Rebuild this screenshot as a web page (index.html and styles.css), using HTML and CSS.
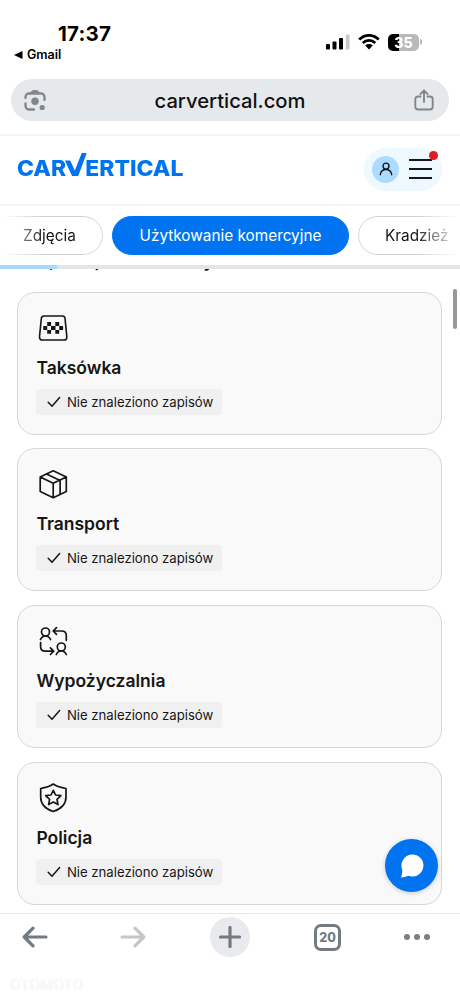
FILE: index.html
```html
<!DOCTYPE html>
<html lang="pl">
<head>
<meta charset="utf-8">
<title>carVertical</title>
<link rel="stylesheet" href="styles.css">
</head>
<body>
<div class="phone">
  <div class="status">
    <div class="status-left">
      <div class="time">17:37</div>
      <div class="back-app"><svg width="9" height="8" viewBox="0 0 9 8"><path d="M0 4 8.500 0V8Z"/></svg><span>Gmail</span></div>
    </div>
    <div class="status-right">
      <svg class="signal" width="24" height="16" viewBox="0 0 24 16"><rect x="0" y="10" width="4" height="5.500" rx="1"/><rect x="6.500" y="7.500" width="4" height="8" rx="1"/><rect x="13" y="4" width="4" height="11.500" rx="1"/><rect x="19.800" y="0.500" width="3.700" height="15" rx="1" fill="#c9c9c9"/></svg>
      <svg class="wifi" width="22" height="16" viewBox="0 0 22 16"><path d="M1.200 5.500C7-.1 15-.1 20.800 5.500M4.700 9c3.700-3.500 8.900-3.500 12.600 0" fill="none" stroke="#000" stroke-width="2.700"/><path d="M7.200 11.500c2.300-1.900 5.300-1.900 7.600 0L11 15.500Z"/></svg>
      <div class="battery"><span>35</span></div>
      <i class="battery-tip"></i>
    </div>
  </div>

  <div class="address">
    <svg width="22" height="22" viewBox="0 0 22 22"><g fill="none" stroke="#80868a" stroke-width="2.300" stroke-linecap="round"><path d="M1.500 9V8a3.500 3.500 0 0 1 3.500-3.500h12A3.500 3.500 0 0 1 20.500 8v3M1.500 14.500V17A3.500 3.500 0 0 0 5 20.500h5"/></g><path d="M5.500 4.500 7.500 2.200Q8.600 1 10 1h2q1.400 0 2.500 1.200l2 2.300Z" fill="#80868a"/><circle cx="11" cy="12.300" r="3.700" fill="#80868a"/><circle cx="18.200" cy="18.500" r="2.600" fill="#80868a"/></svg>
    <span class="host">carvertical.com</span>
    <svg width="20" height="22" viewBox="0 0 20 22" fill="none" stroke="#80868a" stroke-width="1.900" stroke-linecap="round" stroke-linejoin="round"><path d="M6.500 7.500H4A2.700 2.700 0 0 0 1.300 10.200v7.600A2.700 2.700 0 0 0 4 20.500h12a2.700 2.700 0 0 0 2.700-2.700v-7.600A2.700 2.700 0 0 0 16 7.500h-2.500M10 13V1.500M6.500 5 10 1.500 13.500 5"/></svg>
  </div>

  <header class="site">
    <div class="logo" aria-label="CARVERTICAL"><span class="l1">CAR</span><svg width="22" height="24" viewBox="0 0 22 24"><path d="M0 7.500H5L9.300 17.500 15.800 0H20.500L12.500 23H6.700Z"/></svg><span class="l2">ERTICAL</span></div>
    <div class="account">
      <span class="avatar"><svg width="14" height="14" viewBox="0 0 14 14" fill="none" stroke="#161616" stroke-width="1.400" stroke-linecap="round"><circle cx="7" cy="4.100" r="3"/><path d="M1.300 12.700C1.700 9.600 4 7.500 7 7.500s5.300 2.100 5.700 5.200"/></svg></span>
      <span class="burger"><i></i><i></i><i></i></span>
      <b class="alert"></b>
    </div>
  </header>

  <nav class="tabs">
    <span class="tab first">Zdjęcia</span>
    <span class="tab active">Użytkowanie komercyjne</span>
    <span class="tab last">Kradzież</span>
  </nav>
  <div class="progress"><i></i></div>

  <main class="content">
    <div class="intro"><span>Raz, tam posiada liczny</span></div>
    <section class="card">
      <svg class="icon" width="34" height="34" viewBox="0 0 34 34"><path d="M7.200 5h19.600q2.500 0 2.800 2.400l1.900 18q.3 3.600-3 3.600h-23q-3.300 0-3-3.600l1.900-18Q4.700 5 7.200 5Z" transform="translate(1.200 0) scale(.94 1)" fill="none" stroke="#161616" stroke-width="1.700"/><path d="M11.200 11.100h3.900v3.900h4.200v-3.900h3.900v3.900h3.900v3.900h-3.900v3.900h-3.900v-3.900h-4.200v3.900h-3.900v-3.900H7.300v-3.900h3.900ZM11.200 15v3.900h3.900V15ZM19.300 15v3.900h3.900V15Z" fill="#161616" fill-rule="evenodd"/><path d="M15.100 15h4.200v3.900h-4.200Z" fill="#161616"/></svg>
      <h2>Taksówka</h2>
      <p class="tag"><svg width="14" height="12" viewBox="0 0 14 12"><path d="M1.200 6.200 5 10.200 12.600 1.500"/></svg><span>Nie znaleziono zapisów</span></p>
    </section>
    <section class="card">
      <svg class="icon line" width="34" height="34" viewBox="0 0 34 34"><path d="M17.200 3.800 30.300 10v14.400L17.200 30.700 4.200 24.400V10ZM4.200 10l13 6.300L30.300 10M17.200 16.300v14.400M10.500 7l13.600 6.500v13.700"/></svg>
      <h2>Transport</h2>
      <p class="tag"><svg width="14" height="12" viewBox="0 0 14 12"><path d="M1.200 6.200 5 10.200 12.600 1.500"/></svg><span>Nie znaleziono zapisów</span></p>
    </section>
    <section class="card">
      <svg class="icon line" width="34" height="34" viewBox="0 0 34 34"><circle cx="9.500" cy="8" r="4"/><path d="M4.500 15.500Q6 12 9.500 12t5 3.500"/><circle cx="25.300" cy="23" r="4"/><path d="M20.300 30.500q1.500-3.500 5-3.500t5 3.500M30.300 16.300v-4.800Q30.300 7 25.500 7h-8.300M20.500 3.700 17.200 7l3.300 3.300M4.600 18.500v4.300q0 4.400 4.800 4.400h8.300M14.400 23.900l3.300 3.300-3.300 3.300"/></svg>
      <h2>Wypożyczalnia</h2>
      <p class="tag"><svg width="14" height="12" viewBox="0 0 14 12"><path d="M1.200 6.200 5 10.200 12.600 1.500"/></svg><span>Nie znaleziono zapisów</span></p>
    </section>
    <section class="card">
      <svg class="icon line" width="34" height="34" viewBox="0 0 34 34"><path d="M17.200 3Q22 6.200 30 7.500V16C30 23 25 28 17.200 30.500 9.500 28 4.700 23 4.700 16V7.500Q12.500 6.200 17.200 3Z"/><path d="m17.300 9.300 2.300 4.700 5.300.6-3.900 3.700 1 5.300-4.700-2.600-4.700 2.600 1-5.300-3.900-3.700 5.300-.6Z"/></svg>
      <h2>Policja</h2>
      <p class="tag"><svg width="14" height="12" viewBox="0 0 14 12"><path d="M1.200 6.200 5 10.200 12.600 1.500"/></svg><span>Nie znaleziono zapisów</span></p>
    </section>
    <i class="scrollbar"></i>
  </main>

  <footer class="toolbar">
    <svg width="26" height="22" viewBox="0 0 26 22"><path d="M24 11H2.500M11 2.200 2.200 11l8.800 8.800"/></svg>
    <svg class="off" width="26" height="22" viewBox="0 0 26 22"><path d="M2 11h21.500M15 2.200 23.800 11 15 19.800"/></svg>
    <span class="plus"><svg width="22" height="22" viewBox="0 0 22 22"><path d="M1.500 11h19M11 1.500v19"/></svg></span>
    <span class="count">20</span>
    <span class="more"><i></i><i></i><i></i></span>
  </footer>
  <div class="watermark">OTOMOTO</div>
  <div class="chat"><svg width="24" height="24" viewBox="0 0 24 24"><path d="M12.500 0.500a11 11 0 1 1-4.200 21.200Q5 23.500.7 23.500q1.700-2.200 1.600-7.700A11 11 0 0 1 12.500.5Z"/></svg></div>
</div>
</body>
</html>
```
FILE: styles.css
```css
* { box-sizing: border-box; }
body { margin: 0; background: #fff; font-family: Inter, "Liberation Sans", sans-serif; color: #161616; }
svg { display: block; flex: none; }
.phone { position: relative; width: 460px; height: 999px; overflow: hidden; display: flex; flex-direction: column; }

.status { height: 79px; flex: none; display: flex; justify-content: space-between; color: #000; padding: 22px 38px 0 14px; }
.time { font-size: 20.500px; line-height: 24px; font-weight: 700; margin-left: 44px; letter-spacing: .2px; }
.back-app { display: flex; align-items: center; gap: 4px; font-size: 12.500px; font-weight: 600; line-height: 16px; margin-top: 1px; }
.status-right { display: flex; height: 16px; margin-top: 12px; align-items: center; }
.wifi { margin-left: 8px; }
.battery { width: 31px; height: 17px; border-radius: 5px; margin-left: 8px; background: linear-gradient(90deg, #000 35%, #b9b9b9 35%); color: #fff; font-size: 14px; font-weight: 800; line-height: 17px; text-align: center; }
.battery-tip { width: 2px; height: 6px; margin-left: 1px; background: #b9b9b9; border-radius: 0 2px 2px 0; }

.address { height: 42px; flex: none; margin: 0 11px; padding: 0 15px 0 13px; border-radius: 21px; background: #e5e9ec; display: flex; align-items: center; justify-content: space-between; }
.host { font-size: 20.200px; font-weight: 500; color: #111; }

.site { height: 72px; flex: none; margin-top: 13px; border-top: 2px solid #f3f3f3; border-bottom: 2px solid #f5f5f5; display: flex; align-items: center; justify-content: space-between; padding: 0 18px 0 17px; }
.logo { display: flex; align-items: flex-end; height: 24px; margin-top: -10px; color: #0074f0; font-weight: 800; font-size: 21.500px; line-height: 24px; transform: scaleX(1.065); transform-origin: left; }
.logo svg { fill: #0074f0; margin: 0 -3px 0 -1px; }
.logo span { position: relative; top: 3px; }
.account { position: relative; width: 78px; height: 43px; border-radius: 22px; background: #eef8ff; display: flex; align-items: center; padding-left: 8px; gap: 10px; margin-top: -2px; }
.avatar { width: 27px; height: 27px; border-radius: 50%; background: #abdcff; display: flex; align-items: center; justify-content: center; }
.burger { width: 23px; display: flex; flex-direction: column; gap: 7px; }
.burger i { height: 2px; background: #161616; }
.alert { position: absolute; width: 9px; height: 9px; border-radius: 50%; background: #e21a22; left: 65px; top: 3px; }

.tabs { height: 59px; flex: none; display: flex; gap: 9px; padding-top: 10px; overflow: hidden; }
.tab { flex: none; height: 39px; border: 1px solid #cfcfcf; border-radius: 20px; display: flex; align-items: center; font-size: 15.350px; white-space: nowrap; }
.first { width: 113px; margin-left: -10px; padding-left: 32px; -webkit-mask-image: linear-gradient(90deg, transparent 12px, #000 53px); mask-image: linear-gradient(90deg, transparent 12px, #000 53px); }
.active { width: 237px; justify-content: center; background: #0074f0; border-color: #0074f0; color: #fff; }
.last { width: 116px; padding-left: 26px; -webkit-mask-image: linear-gradient(90deg, #000 58px, transparent 100px); mask-image: linear-gradient(90deg, #000 58px, transparent 100px); }
.progress { height: 4px; flex: none; background: #e4e4e4; }
.progress i { display: block; width: 57px; height: 4px; background: #a8d9fb; }

.content { position: relative; height: 644px; flex: none; padding: 0 18px; display: flex; flex-direction: column; gap: 13.700px; }
.intro { height: 9.100px; flex: none; display: flex; align-items: flex-end; overflow: hidden; font-size: 17.300px; font-weight: 600; line-height: 22px; }
.intro span { margin-bottom: 6px; }
.card { height: 143px; flex: none; border: 1px solid #d6d6d6; border-radius: 18px; background: #f9f9f9; padding: 18px; margin: 0 0 0 -0.600px; }
.icon { margin: 0 0 10px -0.500px; }
.line { fill: none; stroke: #161616; stroke-width: 1.700; stroke-linecap: round; stroke-linejoin: round; }
h2 { margin: 0; font-size: 17.500px; line-height: 26px; font-weight: 600; }
.tag { margin: 8px 0 0 -0.500px; width: 186px; height: 26px; border-radius: 4px; background: #f0f0f0; display: flex; align-items: center; padding-left: 11px; gap: 6px; font-size: 13.150px; white-space: nowrap; }
.tag path { fill: none; stroke: #161616; stroke-width: 1.500; stroke-linecap: round; stroke-linejoin: round; }
.scrollbar { position: absolute; right: 3px; top: 20px; width: 4px; height: 40px; border-radius: 2px; background: #999; }

.toolbar { height: 50px; flex: none; border-top: 1px solid #e6e6e6; background: #fff; display: grid; grid-template-columns: 70px 125px 70px 125px 54px; align-items: center; justify-items: center; padding-bottom: 3px; }
.toolbar svg { fill: none; stroke: #747b80; stroke-width: 3.200; stroke-linecap: round; stroke-linejoin: round; }
.toolbar .off { stroke: #c6c6c6; }
.plus { width: 40px; height: 40px; border-radius: 50%; background: #e8eaed; display: flex; align-items: center; justify-content: center; }
.count { width: 27px; height: 27px; border: 3px solid #747b80; border-radius: 7px; color: #747b80; font-size: 12.500px; line-height: 21px; font-weight: 800; text-align: center; }
.more { display: flex; gap: 4px; }
.more i { width: 6px; height: 6px; border-radius: 50%; background: #7b7f83; }
.watermark { margin: 14px 0 0 10px; color: #fff; font-size: 14px; line-height: 16px; letter-spacing: .3px; text-shadow: 0 0 1px #d5d5d5; }
.chat { position: absolute; left: 385px; top: 839px; width: 53px; height: 53px; border-radius: 50%; background: #0074f0; display: flex; align-items: center; justify-content: center; box-shadow: 0 1px 5px #0003; }
.chat svg { fill: #fff; }
```
